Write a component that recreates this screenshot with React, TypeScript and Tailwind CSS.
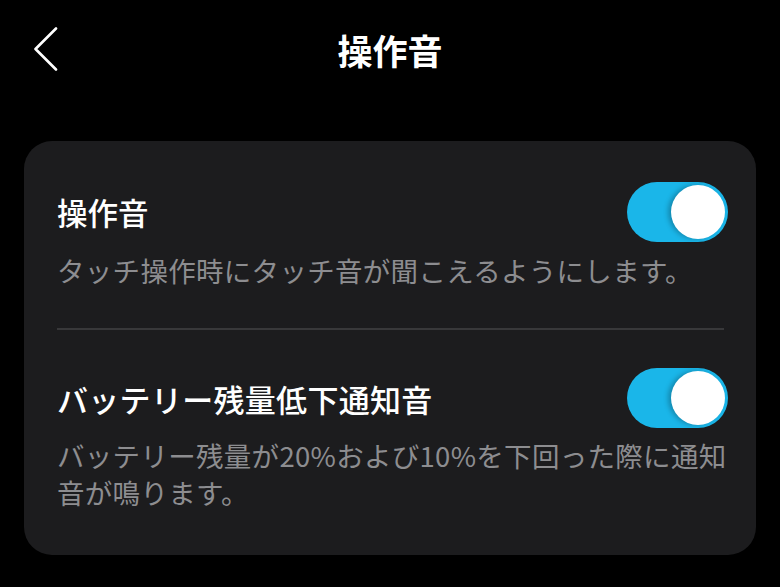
import { useState } from 'react';

const FONT = { fontFamily: '"Noto Sans CJK JP", "Noto Sans", sans-serif' };

interface ToggleProps {
  on: boolean;
  onChange: (v: boolean) => void;
}

function Toggle({ on, onChange }: ToggleProps) {
  return (
    <button
      onClick={() => onChange(!on)}
      className={`relative w-[101px] h-[60px] rounded-full shrink-0 flex items-center px-[3px] transition-colors ${
        on ? 'bg-[#1ab6e9] justify-end' : 'bg-[#48484a] justify-start'
      }`}
    >
      <span className="w-[54px] h-[54px] rounded-full bg-white shadow-[-3px_0_5px_rgba(0,0,0,0.25)]" />
    </button>
  );
}

export default function App() {
  const [touchSound, setTouchSound] = useState(true);
  const [batterySound, setBatterySound] = useState(true);

  return (
    <div className="w-[780px] h-[587px] bg-black overflow-hidden" style={FONT}>
      {/* Header */}
      <div className="grid grid-cols-[1fr_auto_1fr] items-center h-[98px]">
        <div className="pl-[33px] flex items-center">
          <svg width="26" height="44" viewBox="0 0 26 44" fill="none">
            <path d="M23 1.5 L2.5 22 L23 42.5" stroke="white" strokeWidth={2.6} strokeLinecap="round" strokeLinejoin="round" />
          </svg>
        </div>
        <h1 className="text-white text-[35px] font-bold leading-none">操作音</h1>
        <div />
      </div>

      {/* Card */}
      <div className="mt-[43px] mx-[24px] bg-[#1c1c1e] rounded-[28px] pt-[41px] pb-[44px] pl-[33px] pr-[28px]">
        <div className="flex items-center justify-between h-[60px]">
          <span className="text-white text-[30.5px] font-medium leading-none">操作音</span>
          <Toggle on={touchSound} onChange={setTouchSound} />
        </div>
        <p className="mt-[10px] text-[#8d8d90] text-[27.5px] tracking-[0.3px] leading-[37px] whitespace-nowrap">
          タッチ操作時にタッチ音が聞こえるようにします。
        </p>

        <div className="mt-[39px] mr-[4px] h-[2px] bg-[#38383a]" />

        <div className="mt-[38px] flex items-center justify-between h-[60px]">
          <span className="text-white text-[31px] font-medium leading-none tracking-[0.3px]">バッテリー残量低下通知音</span>
          <Toggle on={batterySound} onChange={setBatterySound} />
        </div>
        <p className="mt-[9px] text-[#8d8d90] text-[27.5px] tracking-[0.3px] leading-[37px] whitespace-nowrap">
          バッテリー残量が20%および10%を下回った際に通知
          <br />
          音が鳴ります。
        </p>
      </div>
    </div>
  );
}
